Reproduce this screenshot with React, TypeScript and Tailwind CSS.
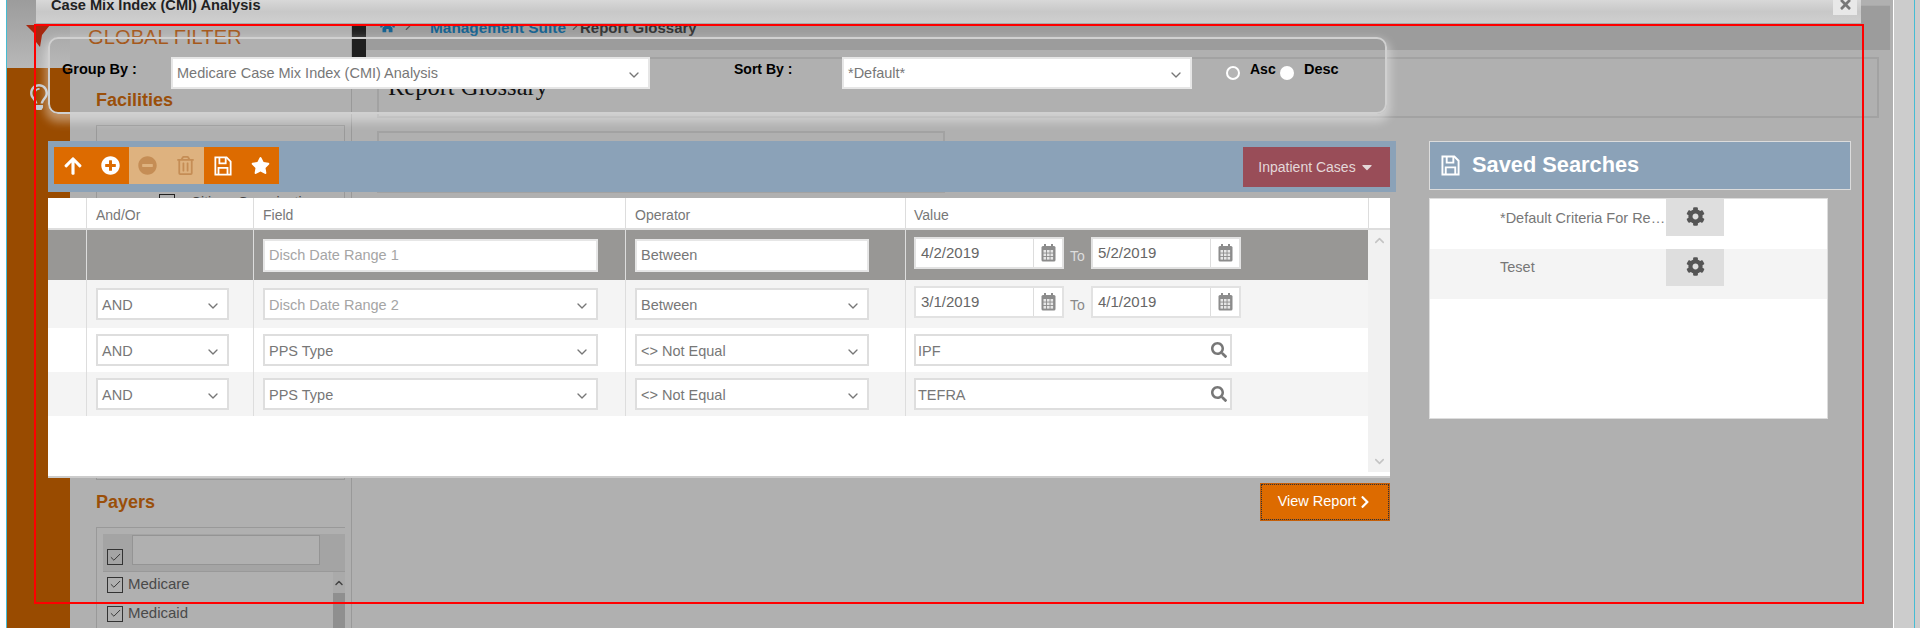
import React from "react";
import { ChevronDown, ChevronRight, ChevronUp, Check } from "lucide-react";
import {
  FaArrowUp,
  FaPlusCircle,
  FaMinusCircle,
  FaRegTrashAlt,
  FaStar,
  FaCog,
  FaSearch,
  FaChevronRight,
  FaTimes,
  FaHome,
  FaRegLightbulb,
  FaCaretDown,
} from "react-icons/fa";

const Select = ({ value, className, muted }: { value: string; className: string; muted?: boolean }) => (
  <div className={`flex h-8 items-center justify-between border-2 border-[#dedede] bg-white pl-[4px] pr-[6px] text-[14.5px] ${muted ? "text-[#a5a5a5]" : "text-[#777]"} ${className}`}>
    <span className="pt-[2px]">{value}</span>
    <ChevronDown size={16} strokeWidth={2} className="mt-[3px] text-[#777]" />
  </div>
);

const Floppy = ({ w, h }: { w: number; h: number }) => (
  <svg width={w} height={h} viewBox="0 0 20 22" fill="none" stroke="currentColor" strokeWidth="2">
    <path d="M1.5 1.5H14L18.5 6V20.5H1.5Z" />
    <path d="M6 1.5V8H13V1.5" />
    <path d="M5 20.5V13H15V20.5" />
  </svg>
);

const Calendar = () => (
  <svg width="15" height="18" viewBox="0 0 15 18" fill="none">
    <rect x="0.5" y="2" width="14" height="15.5" rx="1.5" fill="#8c8c8c" />
    <rect x="3" y="0" width="2" height="3" fill="#8c8c8c" />
    <rect x="10" y="0" width="2" height="3" fill="#8c8c8c" />
    <g fill="#e6e6e6">
      {[2.5, 6, 9.5].map((x) =>
        [6, 9.5, 13].map((y) => <rect key={`${x}-${y}`} x={x} y={y} width="2.6" height="2.6" />)
      )}
    </g>
  </svg>
);

const DateBox = ({ value }: { value: string }) => (
  <div className="flex h-8 w-[150px] border-2 border-[#e2e2e2] bg-white text-[15px] text-[#666]">
    <span className="flex-1 pl-[5px] leading-[28px]">{value}</span>
    <span className="flex w-[29px] items-center justify-center border-l border-[#ddd]">
      <Calendar />
    </span>
  </div>
);

const DateRange = ({ from, to, toClass }: { from: string; to: string; toClass: string }) => (
  <div className="-mt-[2px] flex items-start">
    <DateBox value={from} />
    <span className={`w-[27px] pt-[9px] pl-[6px] text-sm ${toClass}`}>To</span>
    <DateBox value={to} />
  </div>
);

const SearchBox = ({ value }: { value: string }) => (
  <div className="flex h-8 w-[318px] items-center justify-between border-2 border-[#dedede] bg-white pl-[2px] pr-[3px] text-[14.5px] text-[#777]">
    <span className="pt-[2px]">{value}</span>
    <FaSearch size={16} className="text-[#777]" />
  </div>
);

const Row = ({
  className,
  pt,
  andOr,
  field,
  operator,
  value,
}: {
  className: string;
  pt: string;
  andOr?: React.ReactNode;
  field: React.ReactNode;
  operator: React.ReactNode;
  value: React.ReactNode;
}) => (
  <div className={`flex ${className}`}>
    <div className="w-[38px]" />
    <div className={`w-[167px] border-l border-[#ddd] pl-[9px] ${pt}`}>{andOr}</div>
    <div className={`w-[372px] border-l border-[#ddd] pl-[9px] ${pt}`}>{field}</div>
    <div className={`w-[280px] border-l border-[#ddd] pl-[9px] ${pt}`}>{operator}</div>
    <div className={`w-[463px] border-l border-[#ddd] pl-[8px] ${pt}`}>{value}</div>
  </div>
);

const Check16 = () => (
  <span className="flex h-4 w-4 shrink-0 items-center justify-center border border-[#333]">
    <Check size={13} strokeWidth={1.75} className="text-[#333]" />
  </span>
);

const Page = () => (
  <div className="flex h-full">
    <div className="w-[7px] border-r border-[#45bcd3] bg-white" />
    {/* SIDEBAR */}
    <div className="flex w-[63px] flex-col">
      <div className="h-[68px] bg-gradient-to-b from-[#9c9c9c] to-[#b8b8b8]" />
      <div className="flex-1 bg-[#994b00] pt-[16px] pl-[19px]">
        <FaRegLightbulb size={26} className="text-[#c3c9cf]" />
      </div>
    </div>
    {/* FILTER PANEL */}
    <div className="w-[282px] border-r border-[#999] bg-[#b0b0b0] pl-[18px]">
      <p className="pt-[25px] text-[20.2px] leading-[24px] text-[#a5591d]">GLOBAL FILTER</p>
      <p className="mt-[39px] ml-[8px] text-lg leading-[24px] font-bold text-[#9a4f0a]">Facilities</p>
      <div className="mt-[13px] ml-[8px] h-[355px] w-[249px] border border-[#999] pt-[66px] pl-[62px] text-sm text-[#444]">
        <div className="flex items-center gap-4">
          <span className="h-4 w-4 border border-[#222]" />
          <span>Citizen Organization</span>
        </div>
      </div>
      <p className="mt-[10px] ml-[8px] text-lg leading-[24px] font-bold text-[#9a4f0a]">Payers</p>
      <div className="mt-[13px] ml-[8px] h-[110px] w-[249px] overflow-hidden border-t border-l border-[#999] pt-[6px] pl-[6px]">
        <div className="flex h-[38px] items-end gap-[9px] border-b border-[#999] bg-[#a4a4a4] pb-[6px] pl-[4px]">
          <Check16 />
          <div className="h-[30px] w-[188px] border border-[#949494] bg-[#b0b0b0]" />
        </div>
        <div className="flex">
          <div className="-mt-[2px] w-[230px] pl-[4px]">
            <div className="flex h-[29px] items-center gap-[5px] text-[15px] text-[#4a4a4a]">
              <Check16 />
              Medicare
            </div>
            <div className="flex h-[29px] items-center gap-[5px] text-[15px] text-[#4a4a4a]">
              <Check16 />
              Medicaid
            </div>
          </div>
          <div className="w-3 bg-[#aaa]">
            <ChevronUp size={12} strokeWidth={3} className="mt-[5px] text-[#444]" />
            <div className="mt-[4px] h-[40px] bg-[#8f8f8f]" />
          </div>
        </div>
      </div>
    </div>
    {/* MAIN */}
    <div className="w-[1541px] bg-[#b0b0b0]">
      <div className="flex h-[50px]">
        <div className="h-[57px] w-[14px] shrink-0 bg-[#1f1f1f]" />
        <div className="mt-[5px] mr-[3px] flex flex-1 items-start gap-[6px] border-t border-[#aaa] bg-[#9c9c9c] pt-[13px] pl-[14px] text-[15px] leading-[17px] font-bold">
          <FaHome size={15} className="text-[#14618f]" />
          <ChevronRight size={14} className="text-[#555]" />
          <span className="ml-[9px] text-[15.4px] text-[#14618f]">Management Suite</span>
          <ChevronRight size={14} className="-mx-[4px] text-[#555]" />
          <span className="-ml-[4px] text-[#333]">Report Glossary</span>
        </div>
      </div>
      <div className="mt-[7px] ml-[25px] h-[61px] w-[1502px] border-2 border-[#a2a2a2] pt-[10px] pl-[9px] text-[24.5px] text-[#111] [font-family:'Liberation_Serif',serif]">
        Report Glossary
      </div>
      <div className="mt-[13px] ml-[25px] h-[62px] w-[568px] border-2 border-[#a2a2a2]" />
    </div>
    <div className="w-px bg-white" />
    <div className="w-[20px] bg-[#ccc]" />
    <div className="w-px bg-[#45bcd3]" />
    <div className="flex-1 bg-[#ccc]" />
  </div>
);

const Modal = () => (
  <div className="absolute top-0 left-[36px] w-[1825px]">
    {/* TITLE */}
    <div className="flex h-6 items-start justify-between overflow-hidden border-b border-[#aaa] bg-gradient-to-b from-[#d8d8d8] via-[#c8c8c8] to-[#cfcfcf] pr-[4px] pl-[15px]">
      <span className="-mt-[5px] text-[14.6px] leading-[20px] font-bold text-[#222]">Case Mix Index (CMI) Analysis</span>
      <span className="flex h-[15px] w-6 items-start justify-center bg-[#e8e8e8]">
        <FaTimes size={15} className="-mt-[3px] text-[#777]" />
      </span>
    </div>

    {/* GROUP BY */}
    <div className="mt-[13px] ml-[12px] flex h-[77px] w-[1339px] items-start rounded-[10px] border-2 border-[#d0d0d0] pt-[18px] pl-[12px] shadow-[0_5px_10px_3px_rgba(255,255,255,0.4)]">
      <span className="w-[109px] pt-[2px] text-[14.5px] font-bold text-black">Group By :</span>
      <Select value="Medicare Case Mix Index (CMI) Analysis" className="w-[479px] border-[#e6e6e6]" />
      <span className="ml-[84px] w-[108px] pt-[2px] text-sm font-bold text-black">Sort By :</span>
      <Select value="*Default*" className="w-[350px] border-[#e6e6e6]" />
      <span className="mt-[9px] ml-[34px] h-[14px] w-[14px] rounded-full border-2 border-white bg-[#b5b5b5]" />
      <span className="ml-[10px] w-[26px] pt-[2px] text-sm font-bold text-black">Asc</span>
      <span className="mt-[9px] ml-[4px] h-[14px] w-[14px] rounded-full bg-white" />
      <span className="ml-[10px] pt-[2px] text-[14.5px] font-bold text-black">Desc</span>
    </div>

    <div className="mt-[27px] flex items-start">
      {/* CRITERIA */}
      <div className="ml-[12px] w-[1348px]">
        <div className="flex h-[51px] items-start justify-between bg-[#8ba2b8] pt-[6px] pr-[6px] pl-[6px]">
          <div className="flex h-[37px] text-white">
            <span className="flex w-[37.5px] items-center justify-center bg-[#dd6b00]"><FaArrowUp size={20} /></span>
            <span className="flex w-[37.5px] items-center justify-center bg-[#dd6b00]"><FaPlusCircle size={19} /></span>
            <span className="flex w-[37.5px] items-center justify-center bg-[#deb27f] text-[#c58d55]"><FaMinusCircle size={19} /></span>
            <span className="flex w-[37.5px] items-center justify-center bg-[#deb27f] text-[#c58d55]"><FaRegTrashAlt size={19} /></span>
            <span className="flex w-[37.5px] items-center justify-center bg-[#dd6b00]"><Floppy w={18} h={20} /></span>
            <span className="flex w-[37.5px] items-center justify-center bg-[#dd6b00]"><FaStar size={19} /></span>
          </div>
          <button className="flex h-10 w-[147px] items-center justify-center gap-[3px] bg-[#994d58] text-sm text-[#e4d8d8]">
            Inpatient Cases <FaCaretDown size={16} />
          </button>
        </div>

        <div className="mt-[6px] h-[280px] w-[1342px] border-b-2 border-[#ccc] bg-white text-sm text-[#777]">
          <div className="flex h-8 border-b-2 border-[#ddd] leading-[35px]">
            <div className="w-[38px]" />
            <div className="w-[167px] border-l border-[#ddd] pl-[9px]">And/Or</div>
            <div className="w-[372px] border-l border-[#ddd] pl-[9px]">Field</div>
            <div className="w-[280px] border-l border-[#ddd] pl-[9px]">Operator</div>
            <div className="w-[463px] border-l border-[#ddd] pl-[8px]">Value</div>
            <div className="flex-1 border-l border-[#ddd]" />
          </div>
          <div className="flex">
            <div className="w-[1320px]">
              <Row
                className="h-[50px] bg-[#989795]"
                pt="pt-[9px]"
                field={<div className="h-[33px] w-[335px] border-2 border-[#e6e6e6] bg-white pl-[4px] text-[14.5px] leading-[29px] text-[#a5a5a5]">Disch Date Range 1</div>}
                operator={<div className="h-[33px] w-[234px] border-2 border-[#e6e6e6] bg-white pl-[4px] text-[14.5px] leading-[29px]">Between</div>}
                value={<DateRange from="4/2/2019" to="5/2/2019" toClass="text-[#ddd]" />}
              />
              <Row
                className="h-[48px] bg-[#f4f4f4]"
                pt="pt-[8px]"
                andOr={<Select value="AND" className="w-[133px]" />}
                field={<Select value="Disch Date Range 2" className="w-[335px]" muted />}
                operator={<Select value="Between" className="w-[234px]" />}
                value={<DateRange from="3/1/2019" to="4/1/2019" toClass="text-[#888]" />}
              />
              <Row
                className="h-[44px] bg-white"
                pt="pt-[6px]"
                andOr={<Select value="AND" className="w-[133px]" />}
                field={<Select value="PPS Type" className="w-[335px]" />}
                operator={<Select value="<> Not Equal" className="w-[234px]" />}
                value={<SearchBox value="IPF" />}
              />
              <Row
                className="h-[44px] bg-[#f4f4f4]"
                pt="pt-[6px]"
                andOr={<Select value="AND" className="w-[133px]" />}
                field={<Select value="PPS Type" className="w-[335px]" />}
                operator={<Select value="<> Not Equal" className="w-[234px]" />}
                value={<SearchBox value="TEFRA" />}
              />
            </div>
            <div className="flex h-[242px] w-[22px] flex-col items-center justify-between bg-[#f1f1f1] py-[3px] text-[#c4c4c4]">
              <ChevronUp size={15} strokeWidth={2.5} />
              <ChevronDown size={15} strokeWidth={2.5} />
            </div>
          </div>
        </div>

        <div className="mt-[5px] flex w-[1342px] justify-end">
          <button className="flex h-[38px] w-[130px] items-center justify-center gap-[2px] border-2 border-[#c5600a] bg-[#dd6b00] text-[14.5px] text-white outline-1 -outline-offset-2 outline-[#333] outline-dotted">
            View Report <FaChevronRight size={14} />
          </button>
        </div>
      </div>

      {/* SAVED SEARCHES */}
      <div className="ml-[33px] w-[422px]">
        <div className="flex h-[49px] items-center gap-[12px] border border-[#dcdcdc] bg-[#8ba2b8] pl-[11px] text-[21.8px] font-bold text-white">
          <Floppy w={19} h={21} />
          Saved Searches
        </div>
        <div className="mt-[8px] h-[221px] w-[399px] border border-[#ddd] bg-white text-[14.5px] text-[#777]">
          <div className="flex h-[50px] items-start">
            <span className="w-[236px] truncate pt-[9px] pl-[70px]">*Default Criteria For Reports</span>
            <span className="flex h-[37px] w-[58px] items-center justify-center bg-[#dedede] pb-[2px] text-[#555]"><FaCog size={19} /></span>
          </div>
          <div className="flex h-[50px] items-start bg-[#f4f4f4]">
            <span className="w-[236px] truncate pt-[8px] pl-[70px]">Teset</span>
            <span className="flex h-[37px] w-[58px] items-center justify-center bg-[#dedede] pb-[2px] text-[#555]"><FaCog size={19} /></span>
          </div>
        </div>
      </div>
    </div>
  </div>
);

export default function App() {
  return (
    <div className="relative h-[628px] w-[1920px] overflow-hidden bg-white [font-family:'Liberation_Sans',Arial,sans-serif]">
      <Page />
      <Modal />

      {/* FUNNEL MARK */}
      <svg className="absolute top-[24px] left-[26px]" width="24" height="24" viewBox="0 0 24 24">
        <path d="M0 1H24L16 11L14 23L10 18V11Z" fill="#a5280f" />
      </svg>
      {/* RED ANNOTATION */}
      <div className="pointer-events-none absolute top-[24px] left-[34px] h-[580px] w-[1830px] border-2 border-[#ff0000]" />
    </div>
  );
}
